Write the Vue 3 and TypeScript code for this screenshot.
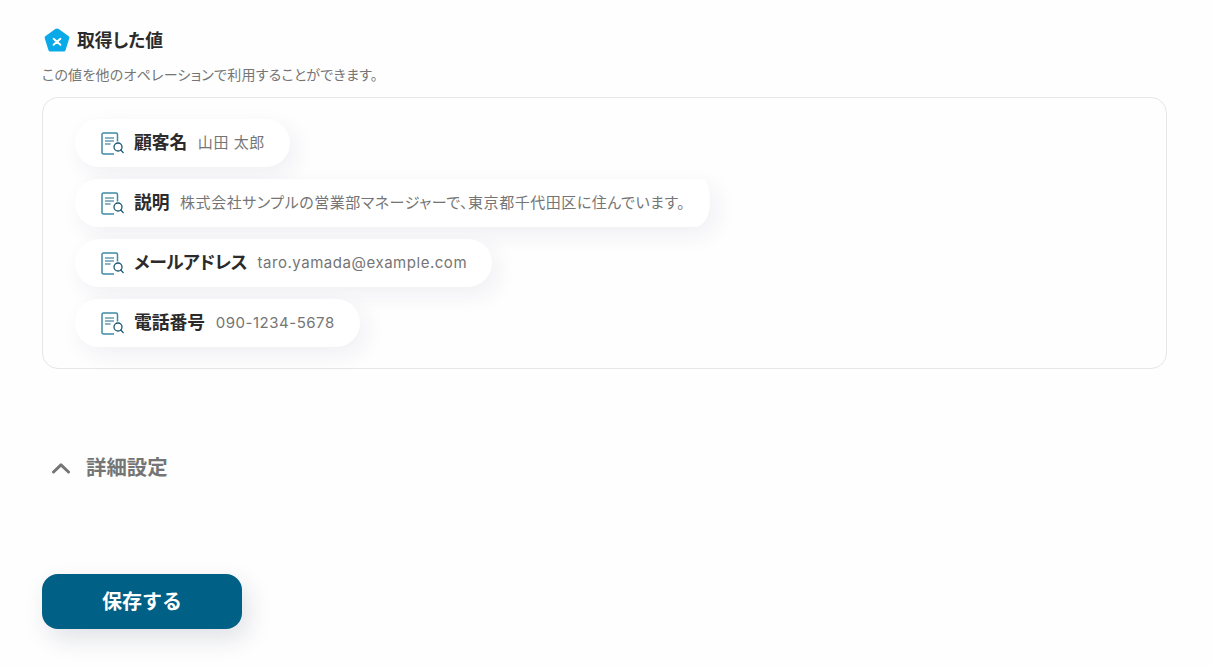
<script setup lang="ts">
interface OutputItem {
  name: string;
  value: string;
  long?: boolean;
  kana?: boolean;
}

const items: OutputItem[] = [
  { name: "顧客名", value: "山田 太郎" },
  { name: "説明", value: "株式会社サンプルの営業部マネージャーで、東京都千代田区に住んでいます。", long: true },
  { name: "メールアドレス", value: "taro.yamada@example.com", kana: true },
  { name: "電話番号", value: "090-1234-5678" },
];
</script>

<template>
  <div class="page">
    <div class="title-row">
      <svg class="title-icon" viewBox="0 0 26 25" fill="none" xmlns="http://www.w3.org/2000/svg">
        <path
          d="M11.3 1 L1.6 8 C0.8 8.6 0.5 9.5 0.8 10.4 L4.4 22 C4.7 23 5.5 23.6 6.5 23.6 L19.5 23.6 C20.5 23.6 21.3 23 21.6 22 L25.2 10.4 C25.5 9.5 25.2 8.6 24.4 8 L14.7 1 C13.7 0.3 12.3 0.3 11.3 1 Z"
          fill="#0aa9e8"
        />
        <path d="M9.6 10.8 L16.4 16.8 M16.4 10.8 L9.6 16.8" stroke="#fff" stroke-width="2" stroke-linecap="round" />
      </svg>
      <span class="title">取得した値</span>
    </div>
    <p class="hint">この値を他のオペレーションで利用することができます。</p>

    <div class="output-box">
      <div v-for="item in items" :key="item.name" class="pill" :class="{ 'pill-long': item.long }">
        <svg class="pill-icon" viewBox="0 0 23 23" fill="none" xmlns="http://www.w3.org/2000/svg">
          <path
            d="M13 22 H2.5 C1.6 22 1 21.4 1 20.5 V2.5 C1 1.6 1.6 1 2.5 1 H15 C15.9 1 16.5 1.6 16.5 2.5 V9.5"
            stroke="#3f8aa5"
            stroke-width="1.5"
          />
          <path d="M4 6 H13 M4 9 H13 M4 12 H9.5" stroke="#1d6a87" stroke-width="1.2" />
          <circle cx="17" cy="15" r="4" stroke="#1b5a75" stroke-width="1.3" />
          <path d="M19.8 18 L22.2 20.6" stroke="#1b5a75" stroke-width="1.4" stroke-linecap="round" />
        </svg>
        <span class="pill-name" :class="{ 'pill-name-kana': item.kana }">{{ item.name }}</span>
        <span class="pill-value">{{ item.value }}</span>
      </div>
    </div>

    <div class="details-row">
      <svg class="chevron" viewBox="0 0 20 12" fill="none" xmlns="http://www.w3.org/2000/svg">
        <path d="M2.5 10 L10 2.8 L17.5 10" stroke="#757575" stroke-width="3" stroke-linecap="round" stroke-linejoin="round" />
      </svg>
      <span class="details-label">詳細設定</span>
    </div>

    <button class="save-btn" type="button">保存する</button>
  </div>
</template>

<style>
html,
body {
  margin: 0;
  background: #fefefe;
}
</style>

<style scoped>
.page {
  box-sizing: border-box;
  height: 666px;
  padding: 27px 45px 0 42px;
  overflow: hidden;
  font-family: Inter, "Noto Sans CJK JP", sans-serif;
  font-feature-settings: "palt";
  color: #2b2b2b;
}

.title-row {
  display: flex;
  align-items: center;
  gap: 7px;
  height: 26px;
  padding-left: 2px;
}
.title-icon {
  width: 26px;
  height: 25px;
  flex-shrink: 0;
}
.title {
  padding-top: 1px;
  font-size: 17.8px;
  font-weight: 700;
  line-height: 26px;
}

.hint {
  margin: 12px 0 0;
  font-size: 14px;
  line-height: 19px;
  letter-spacing: 0.25px;
  color: #757575;
}

.output-box {
  box-sizing: border-box;
  height: 272px;
  margin-top: 13px;
  padding: 21px 32px;
  border: 1px solid #e6e6e6;
  border-radius: 16px;
  display: flex;
  flex-direction: column;
  align-items: flex-start;
  gap: 12px;
}

.pill {
  display: flex;
  align-items: center;
  box-sizing: border-box;
  height: 48px;
  padding: 0 25px 0 26px;
  background: #fff;
  border-radius: 24px;
  box-shadow: 6px 8px 22px rgba(50, 30, 90, 0.07);
}
.pill-long {
  border-radius: 24px 7px 15px 24px / 24px 24px 24px 24px;
}
.pill-icon {
  width: 23px;
  height: 23px;
  flex-shrink: 0;
  margin-right: 10px;
}
.pill-name {
  font-size: 17.8px;
  font-weight: 700;
  line-height: 24px;
  white-space: nowrap;
}
.pill-name-kana {
  letter-spacing: -0.4px;
}
.pill-value {
  margin-left: 10.5px;
  font-size: 15px;
  line-height: 24px;
  letter-spacing: 0.53px;
  color: #757575;
  white-space: nowrap;
}

.details-row {
  display: flex;
  align-items: center;
  gap: 15px;
  height: 26px;
  margin-top: 86px;
  padding-left: 9px;
}
.chevron {
  width: 20px;
  height: 12px;
}
.details-label {
  font-size: 20.4px;
  font-weight: 700;
  line-height: 26px;
  color: #757575;
}

.save-btn {
  display: block;
  width: 200px;
  height: 55px;
  margin-top: 93px;
  padding: 0 0 2px;
  border: none;
  border-radius: 16px;
  background: #006085;
  color: #fff;
  font-family: inherit;
  font-size: 20px;
  font-weight: 700;
  box-shadow: 6px 10px 24px rgba(30, 40, 80, 0.13);
}
</style>
